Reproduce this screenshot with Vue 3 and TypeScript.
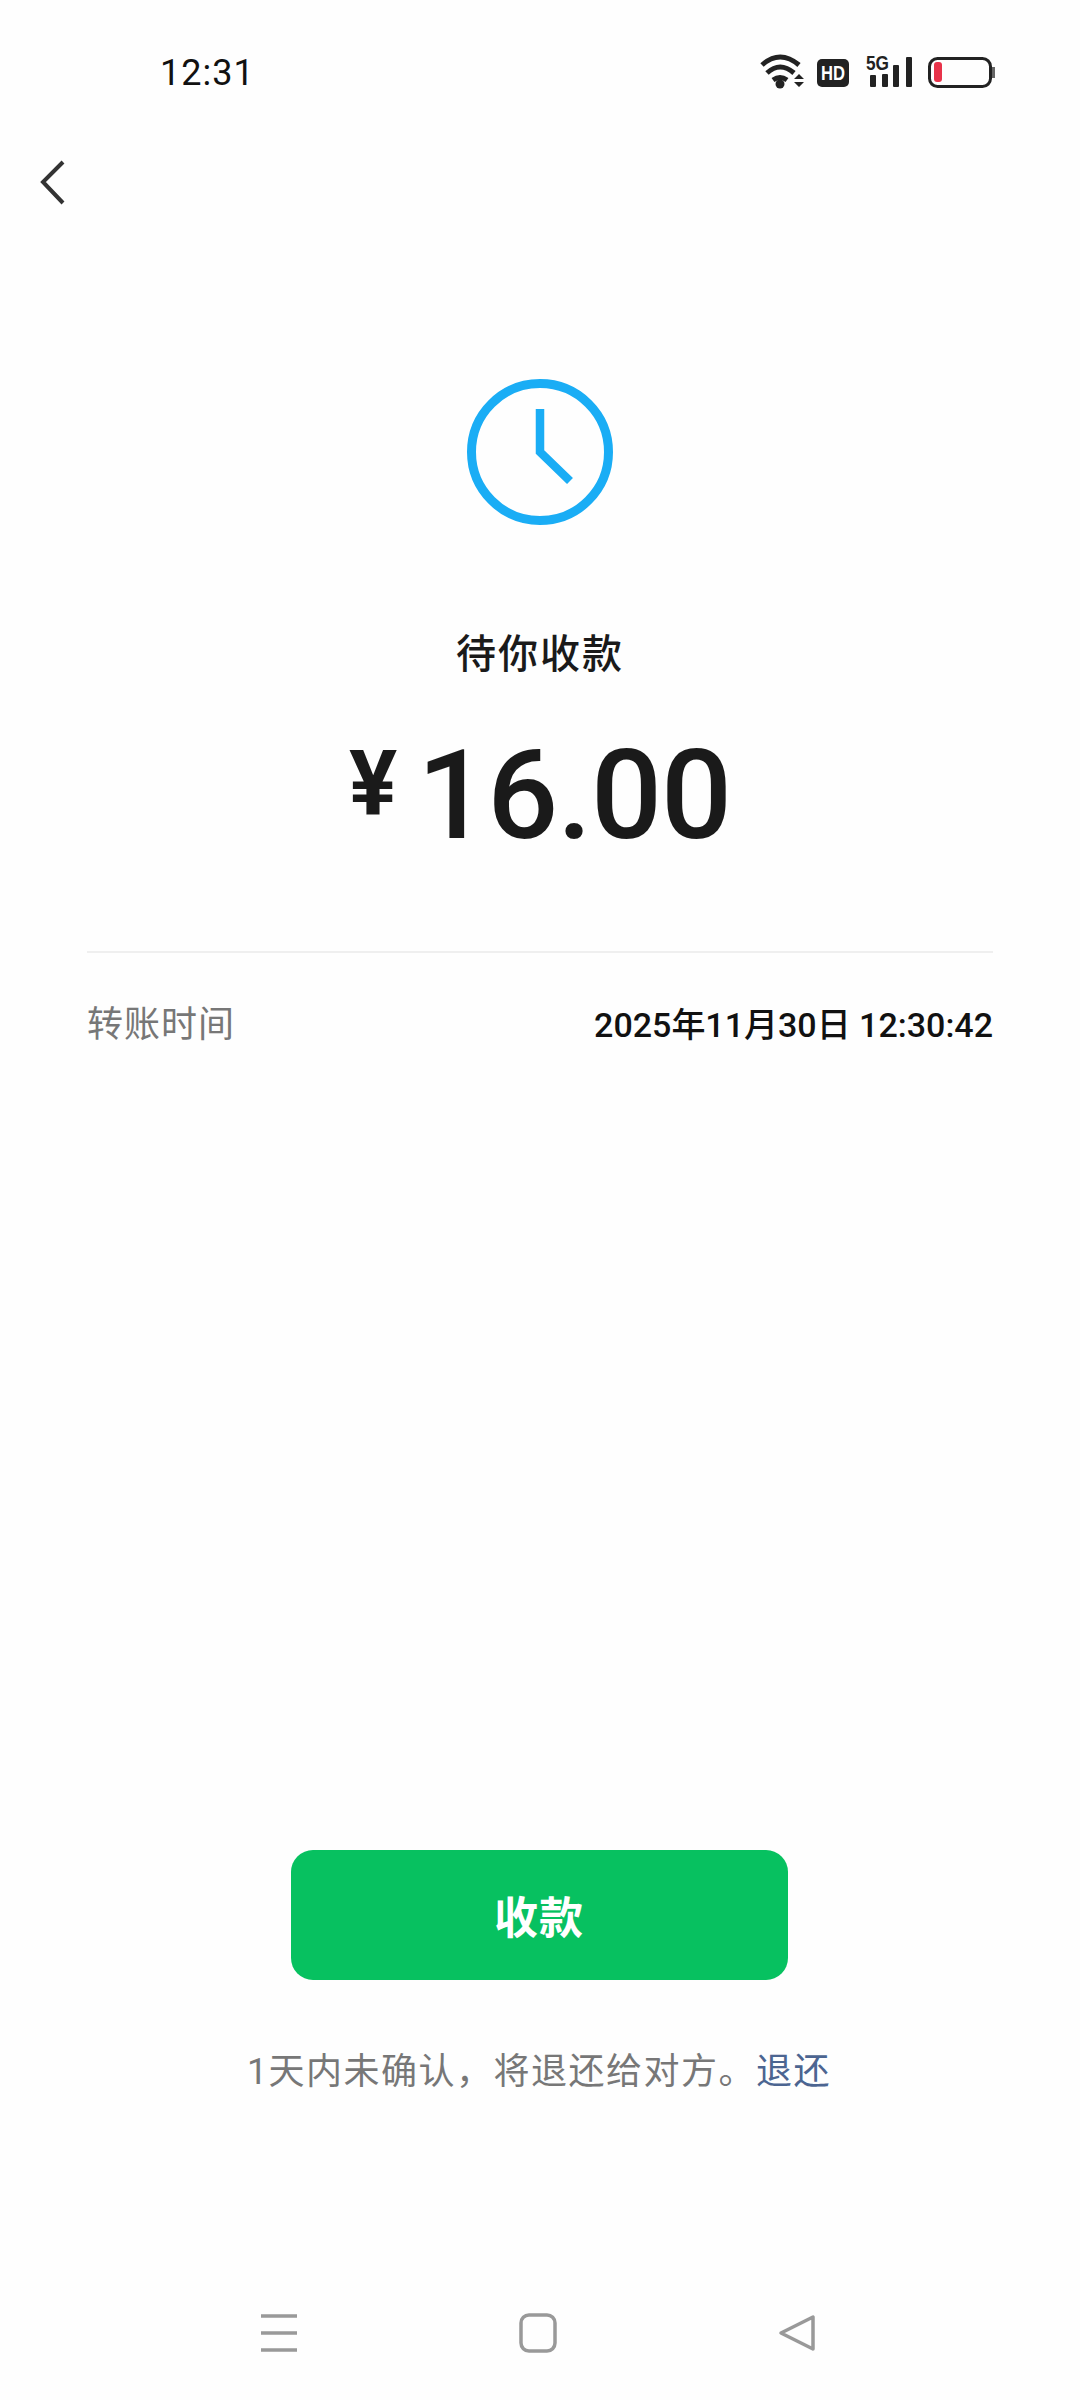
<template>
  <div class="page">
    <div class="status-bar">
      <span class="clock-time">12:31</span>
      <svg class="status-icons" width="240" height="40" viewBox="0 0 240 40">
        <g fill="none" stroke="#222" stroke-width="5">
          <path d="M2 15Q20 -1 39 15" />
          <path d="M7 23Q20 11 34 23" />
          <path d="M13 30Q20 25 27 30" />
        </g>
        <circle cx="20" cy="34" r="4.5" fill="#222" />
        <path d="M34 29L39 24L44 29ZM34 32L44 32L39 37Z" fill="#222" />
        <rect x="57" y="9" width="32" height="28" rx="5" fill="#222" />
        <text class="hd" x="73" y="30" text-anchor="middle" textLength="24" lengthAdjust="spacingAndGlyphs">HD</text>
        <text class="five-g" x="106" y="20" textLength="23" lengthAdjust="spacingAndGlyphs">5G</text>
        <rect v-for="bar in signalBars" :key="bar.x" :x="bar.x" :y="bar.y" width="6" :height="37 - bar.y" rx="1" fill="#222" />
        <rect x="169.5" y="8.5" width="61" height="28" rx="8" fill="none" stroke="#222" stroke-width="3" />
        <rect x="174" y="12" width="8" height="20" rx="3" fill="#e8334a" />
        <rect x="232" y="17" width="3" height="11" fill="#666" />
      </svg>
    </div>

    <div class="top-bar">
      <svg width="30" height="50" viewBox="0 0 30 50">
        <path d="M23 4L3 24L23 45" fill="none" stroke="#333" stroke-width="4" />
      </svg>
    </div>

    <div class="summary">
      <svg class="pending-icon" width="148" height="148" viewBox="0 0 148 148">
        <circle cx="74" cy="74" r="68.5" fill="none" stroke="#1aadf5" stroke-width="9" />
        <path d="M74 31V74L104 103" fill="none" stroke="#1aadf5" stroke-width="8.5" />
      </svg>
      <div class="title">待你收款</div>
      <div class="amount">
        <span class="currency">¥</span>
        <span class="value">{{ amount }}</span>
      </div>
    </div>

    <div class="details">
      <div class="row">
        <span class="label">转账时间</span>
        <span class="time">{{ transferTime }}</span>
      </div>
    </div>

    <div class="actions">
      <button class="receive">收款</button>
      <p class="hint">1天内未确认，将退还给对方。<span class="link">退还</span></p>
    </div>

    <div class="nav-bar">
      <svg width="38" height="40" viewBox="0 0 38 40">
        <path d="M1 3H37M1 20H37M1 37H37" fill="none" stroke="#999" stroke-width="3.5" />
      </svg>
      <svg width="38" height="40" viewBox="0 0 38 40">
        <rect x="2" y="2" width="34" height="36" rx="8" fill="none" stroke="#999" stroke-width="3.5" />
      </svg>
      <svg width="38" height="40" viewBox="0 0 38 40">
        <path d="M35 4V36L3 20Z" fill="none" stroke="#999" stroke-width="3.5" stroke-linejoin="round" />
      </svg>
    </div>
  </div>
</template>

<script setup lang="ts">
interface Bar {
  x: number;
  y: number;
}

const amount = '16.00';
const transferTime = '2025年11月30日 12:30:42';

const signalBars: Bar[] = [
  { x: 110, y: 25 },
  { x: 122, y: 24 },
  { x: 133, y: 15 },
  { x: 146, y: 7 },
];
</script>

<style>
html,
body {
  margin: 0;
  background: #fff;
}
</style>

<style scoped>
.page {
  width: 1080px;
  height: 2400px;
  display: flex;
  flex-direction: column;
  background: #fefefe;
  font-family: Roboto, 'Noto Sans CJK SC', sans-serif;
  color: #1a1a1a;
}

.status-bar {
  height: 90px;
  padding: 51px 80px 0 160px;
  box-sizing: border-box;
  display: flex;
  justify-content: space-between;
  align-items: flex-start;
}

.clock-time {
  font-size: 36px;
  line-height: 44px;
  letter-spacing: 1px;
  color: #111;
}

.status-icons {
  display: block;
  margin-top: -1px;
}

.hd {
  font: 700 20px 'Liberation Sans', sans-serif;
  fill: #fff;
}

.five-g {
  font: 700 20px 'Liberation Sans', sans-serif;
  fill: #222;
}

.top-bar {
  height: 70px;
  padding: 68px 0 0 40px;
}

.top-bar svg {
  display: block;
}

.summary {
  margin-top: 150px;
  display: flex;
  flex-direction: column;
  align-items: center;
}

.pending-icon {
  display: block;
}

.title {
  margin-top: 101px;
  font-size: 40px;
  line-height: 56px;
  letter-spacing: 2px;
  font-weight: 500;
}

.amount {
  margin-top: 53px;
  display: flex;
  align-items: flex-start;
  gap: 20px;
  font-weight: 500;
}

.currency {
  font-size: 90px;
  line-height: 80px;
  font-weight: 700;
  margin-top: 9px;
}

.value {
  font-size: 125px;
  line-height: 120px;
  letter-spacing: -1px;
}

.details {
  margin: 95px 87px 0;
  border-top: 2px solid #efefef;
}

.row {
  display: flex;
  justify-content: space-between;
  align-items: center;
  margin-top: 48px;
  line-height: 48px;
}

.label {
  font-size: 36px;
  letter-spacing: 1px;
  color: #777;
}

.time {
  font-size: 34px;
  font-weight: 500;
  color: #111;
}

.actions {
  margin-top: auto;
  display: flex;
  flex-direction: column;
  align-items: center;
}

.receive {
  width: 497px;
  height: 130px;
  margin-right: 2px;
  border: none;
  border-radius: 22px;
  background: #07c160;
  color: #fff;
  font-family: inherit;
  font-size: 44px;
  font-weight: 700;
  letter-spacing: 1px;
}

.hint {
  margin: 64px 2px 0 0;
  font-size: 36px;
  line-height: 56px;
  letter-spacing: 1.5px;
  color: #777;
}

.link {
  color: #4c6591;
}

.nav-bar {
  margin-top: 213px;
  padding: 0 264px 47px 260px;
  display: flex;
  justify-content: space-between;
}

.nav-bar svg {
  display: block;
}
</style>
